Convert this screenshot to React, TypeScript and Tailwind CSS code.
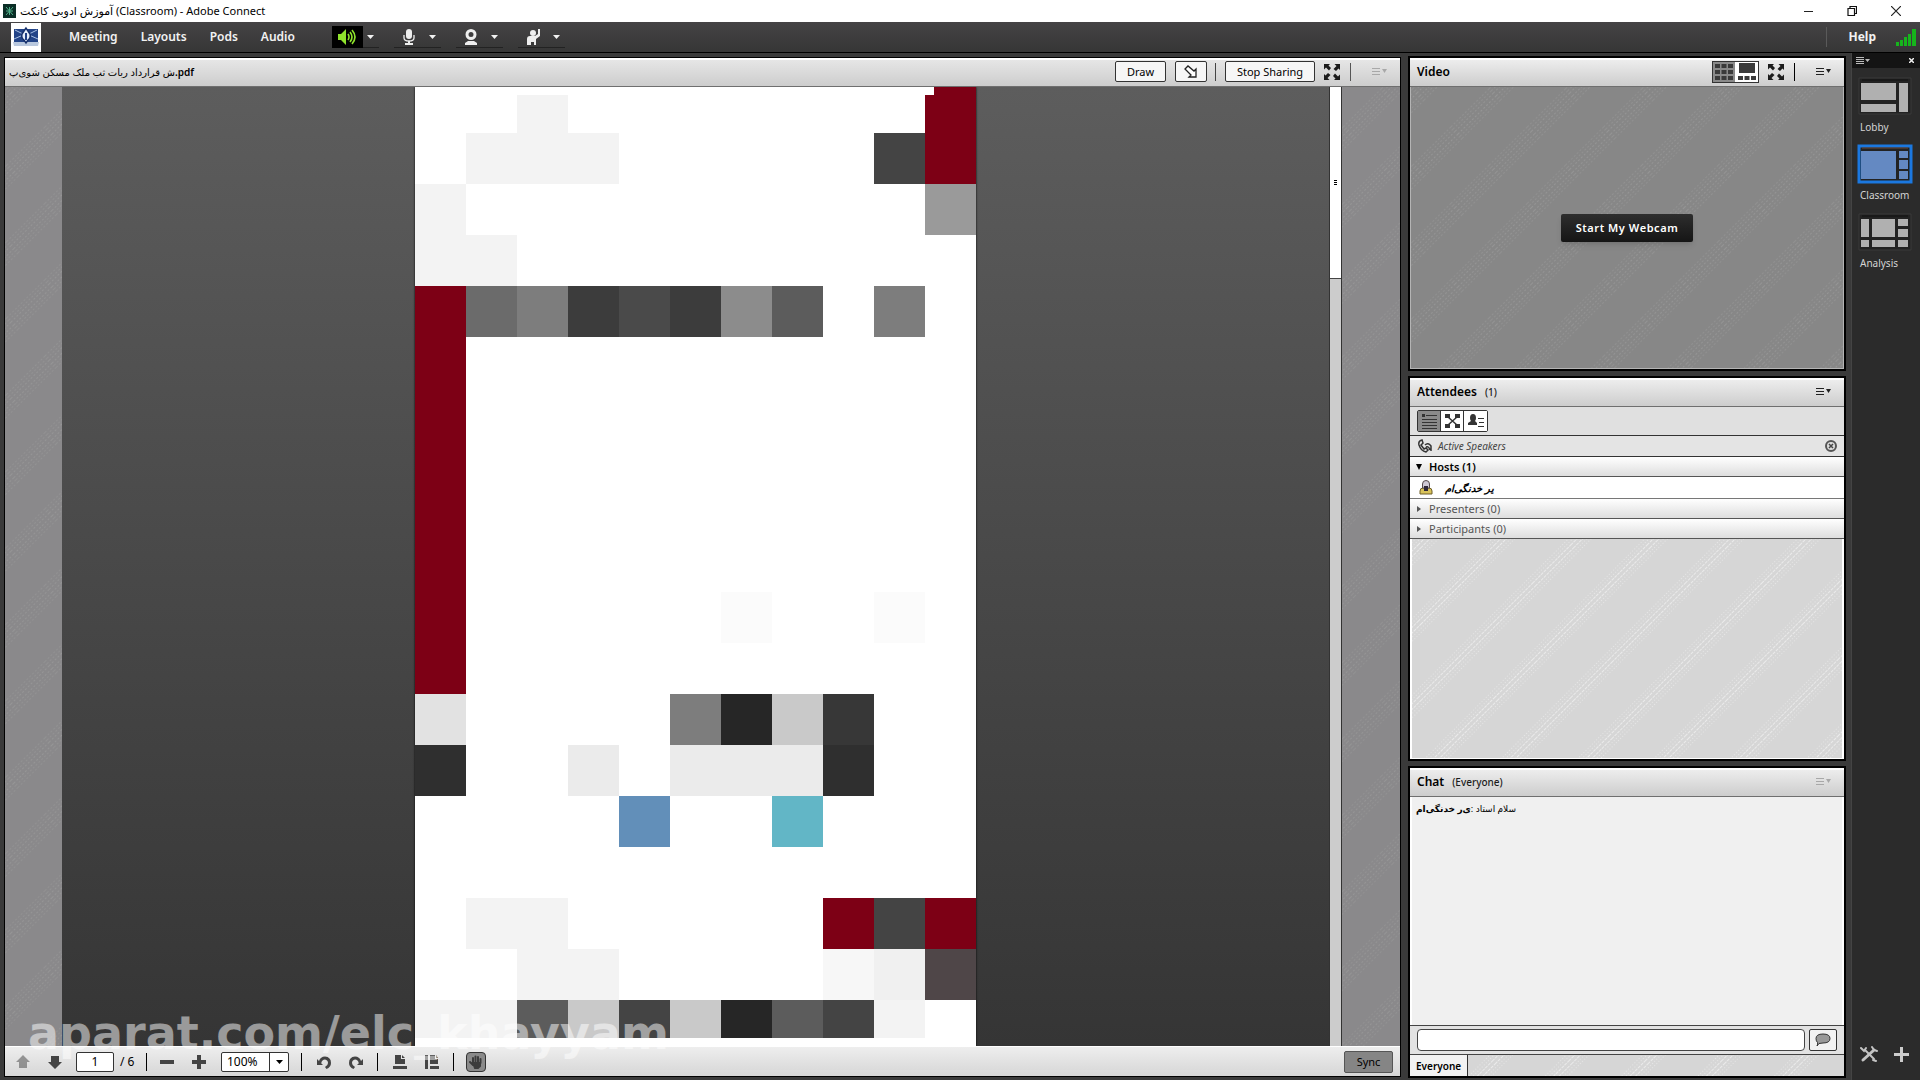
import React from 'react';
import clsx from 'clsx';

const CELL: Record<string, string> = {
    '.': '',
    R: 'bg-[#7d0015]',
    a: 'bg-[#f3f3f3]',
    b: 'bg-[#444444]',
    c: 'bg-[#9a9a9a]',
    d: 'bg-[#6b6b6b]',
    e: 'bg-[#7d7d7d]',
    f: 'bg-[#3c3c3c]',
    g: 'bg-[#4a4a4a]',
    h: 'bg-[#8c8c8c]',
    i: 'bg-[#5c5c5c]',
    j: 'bg-[#fbfbfb]',
    k: 'bg-[#e2e2e2]',
    l: 'bg-[#262626]',
    m: 'bg-[#c9c9c9]',
    n: 'bg-[#373737]',
    o: 'bg-[#2f2f2f]',
    p: 'bg-[#ebebeb]',
    q: 'bg-[#628fb9]',
    r: 'bg-[#62b6c6]',
    s: 'bg-[#4f4648]',
    t: 'bg-[#f7f7f7]',
    u: 'bg-[#f0f0f0]',
};

const FULL_ROWS = [
    '.aaa.....bR',
    'a.........c',
    'aa.........',
    'Rdefgfhi.e.',
    'R..........',
    'R..........',
    'R..........',
    'R..........',
    'R..........',
    'R.....j..j.',
    'R..........',
    'k....elmn..',
    'o..p.pppo..',
    '....q..r...',
    '...........',
    '.aa.....RbR',
    '..aa....tus',
];

const PageRow = ({ cells, className }: { cells: string; className: string }) => (
    <div className={clsx('grid grid-cols-11', className)}>
        {cells.split('').map((c, i) => (
            <div key={i} className={CELL[c]} />
        ))}
    </div>
);

// Diagonal brushed texture behind the pods
const Texture = ({ id, light }: { id: string; light?: boolean }) => (
    <svg className="absolute inset-0 w-full h-full" aria-hidden="true">
        <defs>
            <pattern id={id} width="54" height="54" patternUnits="userSpaceOnUse" patternTransform="rotate(-45)">
                <g stroke={light ? '#f0f0f0' : '#989898'} strokeOpacity={light ? 0.8 : 0.8}>
                    <path d="M0 8.500H54M0 12.500H54" strokeDasharray={light ? '3 1' : '2 2'} />
                    <path d="M0 2.500H54M0 5.500H54M0 15.500H54M0 18.500H54" strokeDasharray={light ? '1 2' : '2 2'} strokeOpacity="0.6" />
                </g>
            </pattern>
        </defs>
        <rect width="100%" height="100%" fill={`url(#${id})`} />
    </svg>
);

const Caret = ({ className }: { className?: string }) => (
    <svg width="7" height="4" viewBox="0 0 7 4" className={className} fill="currentColor">
        <path d="M0 0h7L3.5 4z" />
    </svg>
);

const PodMenu = ({ dim }: { dim?: boolean }) => (
    <button aria-label="Pod options" className={clsx('flex items-center', dim ? 'text-[#a8a8a8]' : 'text-[#222222]')}>
        <svg width="16" height="9" viewBox="0 0 16 9" fill="currentColor">
            <path d="M0 1h8v1H0zM0 4h8v1H0zM0 7h8v1H0zM10 2h5l-2.500 4z" />
        </svg>
    </button>
);

const Expand = () => (
    <button aria-label="Full screen">
        <svg width="16" height="16" viewBox="0 0 16 16" fill="#1c1c1c">
            <path d="M0 0h6L4.5 1.5l2.5 2.5L5 6.500 2 3.500 0 5.500zM16 0v6l-1.500-1.500L12 7 9.500 5l3-3L10.500 0zM0 16v-6l1.500 1.500L4 9l2.500 2-3 3L5.500 16zM16 16h-6l1.500-1.500L9 12l2-2.500 3 3L16 10.500z" />
        </svg>
    </button>
);

const Divider = ({ className }: { className?: string }) => <span className={clsx('w-px h-[18px]', className ?? 'bg-[#222222]')} />;

const PodHeader = ({ title, note, children }: { title: string; note?: string; children: React.ReactNode }) => (
    <header className="flex items-center h-[29px] shrink-0 pl-[7px] pr-3 pb-[3px] border-b border-[#6f6f6f] border-t-2 border-t-white bg-linear-to-b from-[#ededed] to-[#cdcdcd]">
        <h2 className="text-xs font-semibold text-black">{title}</h2>
        {note && <span className="ml-2 text-[10px] leading-4 font-medium text-[#1c1c1c]">{note}</span>}
        <div className="ml-auto flex items-center">{children}</div>
    </header>
);

const MENU = ['Meeting', 'Layouts', 'Pods', 'Audio'];

const DEVICES = [
    {
        label: 'Speakers',
        active: true,
        icon: (
            <svg width="18" height="18" viewBox="0 0 18 18" fill="none" stroke="#8fe32c" strokeWidth="1.6">
                <path d="M0 6h3l5-5v16l-5-5H0z" fill="#8fe32c" stroke="none" />
                <path d="M10 6q2 3 0 6M12 4q4 5 0 10M14 2q6 7 0 14" />
            </svg>
        ),
    },
    {
        label: 'Microphone',
        icon: (
            <svg width="12" height="16" viewBox="0 0 12 16" fill="#eeeeee">
                <rect x="3" y="0" width="6" height="10" rx="3" />
                <path d="M1 6v3q0 3 5 3t5-3V6" fill="none" stroke="#eeeeee" strokeWidth="1.300" />
                <path d="M5 12h2v2h3v2H2v-2h3z" />
            </svg>
        ),
    },
    {
        label: 'Webcam',
        icon: (
            <svg width="14" height="16" viewBox="0 0 14 16" fill="#eeeeee">
                <path fillRule="evenodd" d="M7 0a5.500 5.500 0 1 0 0 11A5.500 5.500 0 0 0 7 0zM7 3a2.500 2.500 0 1 1 0 5 2.500 2.500 0 0 1 0-5z" />
                <path d="M4 12h6l3 2v2H1v-2z" />
            </svg>
        ),
    },
    {
        label: 'Raise hand',
        icon: (
            <svg width="15" height="16" viewBox="0 0 15 16" fill="#eeeeee">
                <circle cx="7" cy="4" r="3" />
                <path d="M1 16v-6q0-3 3-3h5l3-2V0h2v7l-4 3v6H8v-3H5v3z" />
            </svg>
        ),
    },
];

const LAYOUTS = [
    { name: 'Lobby', boxes: 'M2 5h35v17H2zM2 26h35v8H2zM40 5h9v29h-9z' },
    { name: 'Classroom', active: true, boxes: 'M2 5h35v28H2zM40 5h9v7h-9zM40 14h9v9h-9zM40 25h9v8h-9z' },
    { name: 'Analysis', boxes: 'M2 5h8v18H2zM13 5h23v18H13zM39 5h10v7H39zM39 15h10v8H39zM2 26h8v7H2zM13 26h23v7H13zM39 26h10v7H39z' },
];

const TitleBar = () => (
    <div className="flex items-center h-[22px] shrink-0 pl-[3px] bg-white text-black">
        <svg width="13" height="14" viewBox="0 0 13 14">
            <path d="M0 0h13v14H0z" fill="#0b2e27" />
            <path d="M3 3l7 8M10 3l-7 8M6.500 3v8M3 7h7" stroke="#4fae88" fill="none" />
        </svg>
        <span className="ml-1 text-[11px] leading-4 whitespace-nowrap">آموزش ادوبی کانکت (Classroom) - Adobe Connect</span>
        <div className="ml-auto flex items-center gap-[34px] pr-[19px]">
            <button aria-label="Minimize">
                <svg width="9" height="10" viewBox="0 0 9 10" stroke="#222222"><path d="M0 5.500h9" /></svg>
            </button>
            <button aria-label="Restore">
                <svg width="10" height="10" viewBox="0 0 10 10" fill="none" stroke="#111111" strokeWidth="1.200">
                    <path d="M1 2.500h6.500v7H1zM3 2.500v-2h6.500v7h-2" />
                </svg>
            </button>
            <button aria-label="Close">
                <svg width="10" height="10" viewBox="0 0 10 10" stroke="#222222" strokeWidth="1.200"><path d="M0 0l10 10M10 0L0 10" /></svg>
            </button>
        </div>
    </div>
);

const MenuBar = () => (
    <nav className="flex items-center h-[31px] shrink-0 pl-[11px] bg-linear-to-b from-[#454345] to-[#363636] border-b border-black text-[#f2f2f2] text-xs font-semibold">
        <svg width="30" height="29" viewBox="0 0 30 29">
            <path d="M0 0h30v29H0z" fill="#ffffff" />
            <path d="M3 6h24v13H3z" fill="#234488" />
            <path d="M2 19h26l-1 4H3z" fill="#b9c8de" />
            <path d="M3 16l9-4M27 16l-9-4M4 7l8 4M26 7l-8 4" stroke="#a9c0e4" />
            <path d="M15 5l-4 6q-1 4 2 6l2 3 2-3q3-2 2-6z" fill="#e6eefb" stroke="#16306b" strokeWidth="1.500" />
            <path d="M15 10v7" stroke="#1f3f83" strokeWidth="2" />
        </svg>
        <div className="flex gap-[23px] ml-7">
            {MENU.map((m) => (
                <button key={m}>{m}</button>
            ))}
        </div>
        <div className="flex ml-[37px]">
            {DEVICES.map((d) => (
                <div key={d.label} className="flex items-center w-[62px] h-[22px]">
                    <button
                        aria-label={d.label}
                        className={clsx('flex items-center justify-center w-[31px] h-[22px]', d.active ? 'bg-black' : 'border-b border-[#222222]')}
                    >
                        {d.icon}
                    </button>
                    <button aria-label={`${d.label} options`} className="flex items-center justify-center w-4 h-[22px] border-b border-[#222222]">
                        <Caret />
                    </button>
                </div>
            ))}
        </div>
        <span className="ml-auto w-px h-5 bg-[#5a5a5a]" />
        <button className="ml-[21px] font-bold">Help</button>
        <svg width="21" height="18" viewBox="0 0 21 18" className="ml-5 mr-[3px]" fill="#16b51c">
            <path d="M0 14h3v4H0zM4 12h3v6H4zM8 9h3v9H8zM12 6h3v12h-3zM16 1h4v17h-4z" />
        </svg>
    </nav>
);

const ToolIcon = ({ label, d, className }: { label: string; d: string; className?: string }) => (
    <button aria-label={label} className={className}>
        <svg width="16" height="16" viewBox="0 0 16 16" fill="#444444">
            <path d={d} fillRule="evenodd" />
        </svg>
    </button>
);

const UNDO = 'M1 5v6h6L5.200 9.200Q6 5.500 9 5.500q3 .5 3 3.500 0 2.500-3 4l1.500 2Q15 13 15 9q0-6-6-6.500-4.500 0-6 4.500z';
const REDO = 'M15 5v6H9l1.800-1.800Q10 5.500 7 5.500q-3 .5-3 3.500 0 2.500 3 4L5.500 15Q1 13 1 9q0-6 6-6.500 4.500 0 6 4.500z';

const ShareToolbar = () => (
    <div className="flex items-center h-[30px] shrink-0 pl-2.5 pr-[7px] bg-linear-to-b from-[#eeeeee] to-[#d6d6d6] border-t border-white text-black">
        <ToolIcon label="Previous page" d="M8 1l7 7h-3v6H4V8H1z" className="opacity-50" />
        <ToolIcon label="Next page" d="M8 15l7-7h-3V2H4v6H1z" className="ml-4" />
        <input aria-label="Page" defaultValue="1" className="ml-[13px] w-[38px] h-5 rounded-xs border border-[#333333] bg-white text-center text-xs" />
        <span className="ml-1.5 w-5 text-xs whitespace-nowrap">/ 6</span>
        <Divider className="ml-1.5 bg-black" />
        <ToolIcon label="Zoom out" d="M1 6h14v4H1z" className="ml-3" />
        <ToolIcon label="Zoom in" d="M6 1h4v5h5v4h-5v5H6v-5H1V6h5z" className="ml-4" />
        <div className="flex ml-[14px] h-5 w-[68px] border border-[#333333] rounded-xs bg-white">
            <input aria-label="Zoom" defaultValue="100%" className="w-[48px] pl-[5px] text-xs border-r border-[#333333]" />
            <button aria-label="Zoom levels" className="flex flex-1 items-center justify-center"><Caret /></button>
        </div>
        <Divider className="ml-3 bg-black" />
        <ToolIcon label="Rotate left" d={UNDO} className="ml-[14px]" />
        <ToolIcon label="Rotate right" d={REDO} className="ml-4" />
        <Divider className="ml-[13px] bg-black" />
        <ToolIcon label="Fit width" d="M3 1h6v4h4v5H3zM10 1l3 3h-3zM1 12h14v3H1z" className="ml-[14px]" />
        <ToolIcon label="Fit page" d="M6 1h5v4h3v5H6zM12 1l2 3h-2zM1 1h3v14H1zM6 12h9v3H6z" className="ml-4" />
        <Divider className="ml-[13px] bg-black" />
        <button aria-label="Pan" className="ml-3 flex items-center justify-center w-5 h-5 rounded-sm border border-[#333333] bg-[#8a8a8a]">
            <svg width="14" height="14" viewBox="0 0 14 14" fill="none" stroke="#3c3c3c" strokeWidth="2" strokeLinecap="round">
                <path d="M4 8V3M6.500 7V1.500M9 7V2M11.500 8V4M1 7l3 3" />
                <path d="M4 8h7v3l-2 2H6z" fill="#3c3c3c" />
            </svg>
        </button>
        <button className="ml-auto w-[49px] h-[22px] rounded-xs border border-[#555555] bg-[#858585] text-[11px] leading-4">Sync</button>
    </div>
);

const SharePod = () => (
    <section className="flex flex-col flex-[1395] min-w-0 outline outline-black">
        <header className="flex items-center h-[29px] shrink-0 pl-1 pr-3 pb-[3px] border-b border-[#6f6f6f] border-t-2 border-t-white bg-linear-to-b from-[#e6e6e6] to-[#cdcdcd] text-black">
            <h2 className="text-[10px] leading-4 font-semibold whitespace-nowrap">
                <bdi className="font-medium">ش قرارداد ربات ثب ملک مسکن شوی‌پ</bdi>
                .pdf
            </h2>
            <div className="ml-auto flex items-center text-[11px] leading-4">
                <button className="w-[51px] h-[21px] rounded-xs border border-[#333333] bg-[#f6f6f6]">Draw</button>
                <button aria-label="Pointer" className="ml-[9px] flex items-center justify-center w-8 h-[21px] rounded-xs border border-[#333333] bg-[#f6f6f6]">
                    <svg width="14" height="14" viewBox="0 0 14 14" fill="#ffffff" stroke="#222222" strokeWidth="1.300">
                        <path d="M1 4l3-3 6 5 2-2v8H5l2-2z" />
                    </svg>
                </button>
                <Divider className="ml-2 bg-[#444444]" />
                <button className="ml-[9px] w-[90px] h-[21px] rounded-xs border border-[#333333] bg-[#f6f6f6]">Stop Sharing</button>
                <span className="flex ml-[9px]"><Expand /></span>
                <Divider className="ml-2.5 mr-[21px] bg-[#555555]" />
                <PodMenu dim />
            </div>
        </header>
        <div className="relative flex flex-1 min-h-0 bg-[#8a898b]">
            <Texture id="share-texture" />
            <div className="relative flex flex-1 min-w-0 ml-[57px] mr-[58px]">
                <div className="flex-1 flex justify-center overflow-hidden bg-linear-to-b from-[#5d5d5d] to-[#353535]">
                    <div className="w-[561px] bg-white shadow-[0_0_2px_#000000]">
                        <div className="flex h-2 justify-end"><div className="w-[42px] bg-[#7d0015]" /></div>
                        <PageRow cells="..a.......R" className="h-[38px]" />
                        {FULL_ROWS.map((row, i) => (
                            <PageRow key={i} cells={row} className="h-[51px]" />
                        ))}
                        <PageRow cells="aaimbmliba." className="h-[38px]" />
                    </div>
                </div>
                <div className="w-[13px] bg-[#cccccc] border-x border-[#333333]">
                    <div className="flex flex-col gap-px items-center justify-center h-1/5 bg-white border-b border-[#444444]">
                        <span className="w-[3px] h-px bg-black" />
                        <span className="w-[3px] h-px bg-black" />
                        <span className="w-[3px] h-px bg-black" />
                    </div>
                </div>
            </div>
        </div>
        <ShareToolbar />
    </section>
);

const VideoPod = () => (
    <section className="flex flex-col flex-[311] min-h-0 outline-2 outline-black">
        <PodHeader title="Video">
            <div className="flex h-[22px] border border-[#333333]">
                <button aria-label="Grid view" className="flex items-center justify-center w-[22px] bg-[#8a8a8a]">
                    <svg width="18" height="16" viewBox="0 0 18 16" fill="#3a3a3a">
                        <path d="M0 0h5v4H0zM6.500 0h5v4h-5zM13 0h5v4h-5zM0 6h5v4H0zM6.500 6h5v4h-5zM13 6h5v4h-5zM0 12h5v4H0zM6.500 12h5v4h-5zM13 12h5v4h-5z" />
                    </svg>
                </button>
                <button aria-label="Filmstrip view" className="flex items-center justify-center w-[23px] bg-white">
                    <svg width="18" height="17" viewBox="0 0 18 17" fill="#3a3a3a">
                        <path d="M1 0h16v10H1zM0 13h5v4H0zM6.500 13h5v4h-5zM13 13h5v4h-5z" />
                    </svg>
                </button>
            </div>
            <span className="flex ml-[9px]"><Expand /></span>
            <Divider className="ml-2.5 mr-[21px] bg-black" />
            <PodMenu />
        </PodHeader>
        <div className="relative flex flex-1 items-center justify-center bg-[#878787] border border-t-0 border-[#b4b4b4]">
            <Texture id="video-texture" />
            <button className="relative w-[132px] h-7 rounded-xs bg-linear-to-b from-[#2e2e2e] to-[#151515] text-white text-[11px] leading-4 font-semibold tracking-wider whitespace-nowrap shadow-md">
                Start My Webcam
            </button>
        </div>
    </section>
);

const GroupRow = ({ label, open }: { label: string; open?: boolean }) => (
    <button
        className={clsx(
            'flex items-center h-5 shrink-0 pl-1.5 border-b border-[#555555] bg-linear-to-b from-white to-[#dedede] text-[11px] leading-4',
            open ? 'font-semibold text-black' : 'text-[#555555]'
        )}
    >
        <svg width="6" height="6" viewBox="0 0 6 6" fill="currentColor">
            <path d={open ? 'M0 0h6L3 6z' : 'M1 0l4 3-4 3z'} />
        </svg>
        <span className="ml-[7px]">{label}</span>
    </button>
);

const AttendeesPod = () => (
    <section className="flex flex-col flex-[381] min-h-0 bg-[#d6d6d6] outline-2 outline-black">
        <PodHeader title="Attendees" note="(1)"><PodMenu /></PodHeader>
        <div className="flex items-center h-[29px] shrink-0 pl-[7px] bg-[#e0e0e0] border-b border-[#333333]">
            <div className="flex h-[22px] border border-[#333333] rounded-xs divide-x divide-[#333333]">
                <button aria-label="Attendee list" className="flex items-center justify-center w-[23px] bg-[#8a8a8a]">
                    <svg width="15" height="15" viewBox="0 0 15 15" fill="#333333">
                        <path d="M0 0h3v3H0zM4 1h11v1H4zM0 5h15v1H0zM0 8h15v1H0zM0 11h15v1H0zM0 14h15v1H0z" />
                    </svg>
                </button>
                <button aria-label="Breakout rooms" className="flex items-center justify-center w-[23px] bg-white">
                    <svg width="15" height="14" viewBox="0 0 15 14" fill="#333333">
                        <path d="M0 0h5v4H0zM10 0h5v4h-5zM0 10h5v4H0zM10 10h5v4h-5z" />
                        <path d="M3 3l9 8M12 3l-9 8" stroke="#333333" strokeWidth="1.500" />
                    </svg>
                </button>
                <button aria-label="Status view" className="flex items-center justify-center w-[23px] bg-white">
                    <svg width="16" height="14" viewBox="0 0 16 14" fill="#333333">
                        <path d="M5 0q3 0 3 4 0 2-1 3l2 2v2H0V9l3-2Q2 6 2 4q0-4 3-4zM10 4h6v1h-6zM11 8h5v1h-5zM10 12h6v1h-6z" />
                    </svg>
                </button>
            </div>
        </div>
        <div className="flex items-center h-[21px] shrink-0 pl-2 pr-[7px] bg-[#e4e4e4] border-b border-[#333333] text-[10px] leading-4 italic text-[#444444]">
            <svg width="14" height="14" viewBox="0 0 14 14" fill="none" stroke="#333333" strokeWidth="1.500">
                <path d="M4 1Q0 2 1 6q2 6 7 7l2-2-2-2-2 1-3-4 2-2zM7 6q3-3 6 1v5M8 8q3-1 4 3" />
            </svg>
            <span className="ml-1.5">Active Speakers</span>
            <button aria-label="Hide active speakers" className="ml-auto">
                <svg width="12" height="12" viewBox="0 0 12 12">
                    <circle cx="6" cy="6" r="5" fill="#dddddd" stroke="#555555" strokeWidth="2" />
                    <path d="M4 4l4 4M8 4L4 8" stroke="#444444" strokeWidth="1.500" />
                </svg>
            </button>
        </div>
        <GroupRow label="Hosts (1)" open />
        <div className="flex items-center h-[22px] shrink-0 pl-[9px] bg-white border-b border-[#777777] text-black">
            <svg width="14" height="15" viewBox="0 0 14 15">
                <path d="M1 14v-3q0-3 3-3h6q3 0 3 3v3z" fill="#d8c25a" stroke="#6e5e28" />
                <path d="M3.500 8V4q0-3.500 3.500-3.500T10.500 4v4z" fill="#cfc8d4" stroke="#55484a" />
                <path d="M5 6h4v5H5z" fill="#2e2638" />
            </svg>
            <span className="ml-3 text-[10px] leading-4 font-bold italic"><bdi>یر خدنگی‌ام</bdi></span>
        </div>
        <GroupRow label="Presenters (0)" />
        <GroupRow label="Participants (0)" />
        <div className="relative flex-1 border-x-2 border-b border-white"><Texture id="attendees-texture" light /></div>
    </section>
);

const ChatPod = () => (
    <section className="flex flex-col flex-[308] min-h-0 bg-[#d6d6d6] outline-2 outline-black">
        <PodHeader title="Chat" note="(Everyone)"><PodMenu dim /></PodHeader>
        <div className="flex-1 px-1 pt-1 bg-[#f0f0f0] border-x-2 border-white text-black">
            <p className="text-[9px] leading-4">
                <b><bdi>ی‌ر خدنگی‌ام</bdi></b>
                <span>: </span>
                <bdi>سلام استاد</bdi>
            </p>
        </div>
        <div className="flex items-center gap-1 h-[30px] shrink-0 px-[7px] border-y border-[#444444] bg-[#e2e2e2]">
            <input aria-label="Chat message" className="flex-1 min-w-0 h-[22px] px-1 rounded-sm border border-[#444444] bg-white text-xs" />
            <button aria-label="Send message" className="flex items-center justify-center w-7 h-[22px] rounded-xs border border-[#333333] bg-[#f2f2f2]">
                <svg width="16" height="14" viewBox="0 0 16 14" fill="#999999" stroke="#333333">
                    <path d="M8 1q7 0 7 4.500T8 10l-4 .5L2 13q1-2 .5-3.500Q1 8 1 5.500 1 1 8 1z" />
                </svg>
            </button>
        </div>
        <div className="relative flex h-[21px] shrink-0">
            <Texture id="chat-texture" light />
            <button className="relative px-1.5 border-r border-[#333333] bg-[#f2f2f2] text-[10px] leading-4 font-semibold text-black">Everyone</button>
        </div>
    </section>
);

const LayoutBar = () => (
    <aside className="flex flex-col w-[69px] shrink-0 bg-[#2b2b2b] border-l border-[#444444] text-[#d4d4d4]">
        <div className="flex items-center justify-between h-[15px] pl-1 pr-1.5 bg-[#141414]">
            <svg width="14" height="7" viewBox="0 0 14 7" fill="#bbbbbb"><path d="M0 0h8v1H0zM0 2h8v1H0zM0 4h8v1H0zM0 6h8v1H0zM9 2h5l-2.500 3z" /></svg>
            <button aria-label="Close layout bar">
                <svg width="5" height="5" viewBox="0 0 5 5" stroke="#eeeeee" strokeWidth="1.500"><path d="M0 0l5 5M5 0L0 5" /></svg>
            </button>
        </div>
        <div className="flex flex-col gap-1.5 pt-2 pl-[5px]">
            {LAYOUTS.map((l) => (
                <button key={l.name} className="flex flex-col items-start w-14 text-[10px] leading-[22px]">
                    <svg width="56" height="40" viewBox="-2 -2 56 40">
                        <path d="M0 0h52v36H0z" fill="#222222" stroke={l.active ? '#1b78e0' : '#3a3a3a'} strokeWidth={l.active ? 3 : 1} />
                        <path d={l.boxes} fill={l.active ? '#6489c2' : '#b0b0b0'} />
                        <path d="M3 2h46" stroke={l.active ? '#6a4a3a' : '#111111'} />
                    </svg>
                    <span className="ml-[3px]">{l.name}</span>
                </button>
            ))}
        </div>
        <div className="flex items-center gap-4 mt-auto pb-[17px] pl-2">
            <button aria-label="Layout tools">
                <svg width="18" height="18" viewBox="0 0 18 18" fill="none" stroke="#c4c4c4" strokeLinecap="round">
                    <path d="M3 15L14 5" strokeWidth="3" />
                    <path d="M5 5l9 9" strokeWidth="2" />
                    <path d="M1 3l3 3 2-3M12 2l2 3 3 1M13 15l3 1" strokeWidth="2" />
                </svg>
            </button>
            <button aria-label="New layout">
                <svg width="15" height="15" viewBox="0 0 15 15" fill="#cccccc"><path d="M6 0h3v6h6v3H9v6H6V9H0V6h6z" /></svg>
            </button>
        </div>
    </aside>
);

export default function App() {
    return (
        <div className="relative flex flex-col h-screen overflow-hidden bg-[#3a3a3a] font-['Noto_Sans','DejaVu_Sans',sans-serif]">
            <TitleBar />
            <MenuBar />
            <div className="flex flex-1 min-h-0">
                <main className="flex flex-1 min-w-0 gap-2.5 pt-[5px] pb-1 pl-[5px] pr-[7px]">
                    <SharePod />
                    <div className="flex flex-col gap-[9px] flex-[434] min-w-0">
                        <VideoPod />
                        <AttendeesPod />
                        <ChatPod />
                    </div>
                </main>
                <LayoutBar />
            </div>
            <div className="absolute left-7 bottom-7 text-[46px] leading-[38px] font-bold text-white/50 font-['DejaVu_Sans',sans-serif] pointer-events-none">
                aparat.com/elc_khayyam
            </div>
        </div>
    );
}
